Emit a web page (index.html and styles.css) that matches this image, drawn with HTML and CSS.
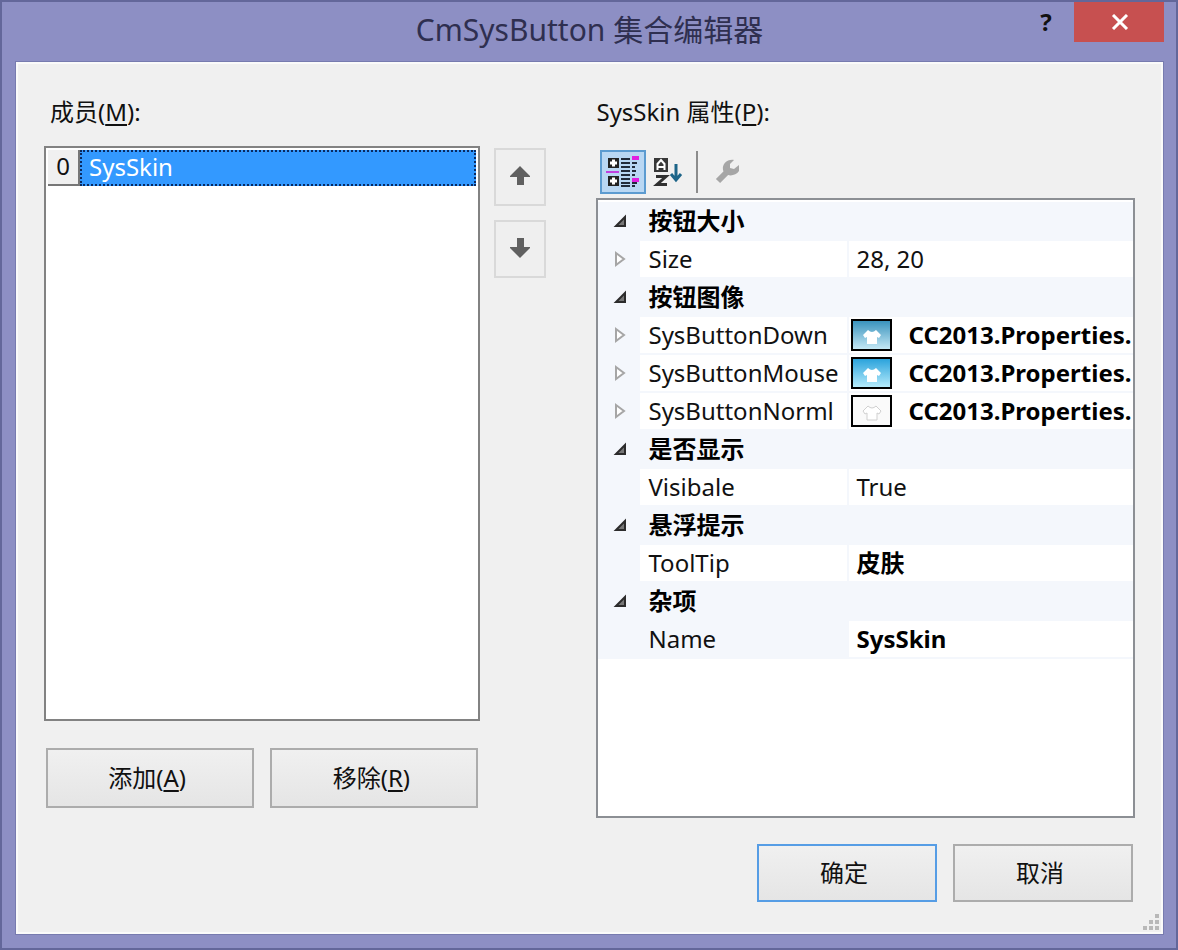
FILE: index.html
```html
<!DOCTYPE html>
<html lang="zh-CN">
<head>
<meta charset="utf-8">
<title>CmSysButton 集合编辑器</title>
<link rel="stylesheet" href="styles.css">
</head>
<body>
<main class="window">
  <header class="titlebar">
    <h1 class="title">CmSysButton 集合编辑器</h1>
    <div class="window-buttons">
      <button class="help" type="button" aria-label="帮助">?</button>
      <button class="close" type="button" aria-label="关闭">
        <svg width="18" height="16" viewBox="0 0 18 16"><path d="M2 1 L16 15 M16 1 L2 15" stroke="#fff" stroke-width="3" fill="none"/></svg>
      </button>
    </div>
  </header>
  <div class="client">
    <div class="panes">
      <section class="members">
        <h2 class="label" id="members-label">成员(<u>M</u>):</h2>
        <div class="member-list" role="listbox" aria-labelledby="members-label">
          <div class="member" role="option" aria-selected="true">
            <span class="member-index">0</span>
            <span class="member-name">SysSkin</span>
          </div>
        </div>
        <div class="member-actions">
          <button class="button" type="button">添加(<u>A</u>)</button>
          <button class="button" type="button">移除(<u>R</u>)</button>
        </div>
      </section>
      <div class="order">
        <button class="order-button" type="button" aria-label="上移">
          <svg width="20" height="20" viewBox="0 0 20 20"><path d="M10 0 L20 10 V11 H14 V19 H7 V11 H0 V10 Z" fill="#606060"/></svg>
        </button>
        <button class="order-button" type="button" aria-label="下移">
          <svg width="20" height="20" viewBox="0 0 20 20"><path d="M10 20 L20 10 V9 H14 V0 H7 V9 H0 V10 Z" fill="#606060"/></svg>
        </button>
      </div>
      <section class="properties">
        <h2 class="label">SysSkin 属性(<u>P</u>):</h2>
        <div class="toolbar">
          <button class="tool tool-active" type="button" aria-label="按分类顺序">
            <svg width="34" height="36" viewBox="0 0 34 36">
              <path d="M2 4h11v10H2z M2 22h11v10H2z" fill="#222"/>
              <path d="M7.500 5.500v7 M4 9h7 M7.500 23.500v7 M4 27h7" stroke="#fff" stroke-width="3"/>
              <path d="M0 18h13" stroke="#c040e0" stroke-width="2"/>
              <path d="M15 5h9 M15 9h9 M15 13h9 M15 17h9 M15 21h9 M15 25h9 M15 29h9 M15 32h9 M26 9h5 M26 13h3 M26 17h4 M26 21h3 M26 29h5 M26 32h3" stroke="#222b3a" stroke-width="2"/>
              <path d="M26 2h7v4h-7z M26 24h7v4h-7z" fill="#e020e0"/>
            </svg>
          </button>
          <button class="tool" type="button" aria-label="字母顺序">
            <svg width="32" height="32" viewBox="0 0 32 32">
              <path d="M2 2h14v14H2z" fill="#383838"/>
              <path d="M5.500 14V8l3.500-4l3.500 4v6 M6 11h6" stroke="#fff" stroke-width="2" fill="none"/>
              <path d="M4 20.500h10L5 28.500h10" stroke="#303030" stroke-width="3" fill="none"/>
              <path d="M24 8v16 M19 18l5 6l5-6" stroke="#1c6488" stroke-width="3" fill="none"/>
            </svg>
          </button>
          <span class="separator"></span>
          <button class="tool" type="button" aria-label="属性页" disabled>
            <svg width="26" height="26" viewBox="0 0 26 26">
              <path d="M4 22L14 12" stroke="#a6a6a6" stroke-width="6"/>
              <path d="M20 1C13 0 8 5 9 11C11 18 21 18 25 12V6L20 10L16 9V5Z" fill="#a6a6a6"/>
            </svg>
          </button>
        </div>
        <div class="grid-box">
          <table class="grid">
            <colgroup><col class="col-gutter"><col class="col-name"><col></colgroup>
            <tbody>
              <tr class="category"><td><svg class="glyph" width="14" height="14" viewBox="0 0 14 14"><path d="M12 3V12H3Z" fill="#777" stroke="#2c2c2c" stroke-width="2"/></svg></td><th colspan="2">按钮大小</th></tr>
              <tr><td><svg class="glyph" width="14" height="18" viewBox="0 0 14 18"><path d="M3 3L11 9L3 15Z" fill="#fff" stroke="#a6a6a6" stroke-width="2"/></svg></td><th>Size</th><td>28, 20</td></tr>
              <tr class="category"><td><svg class="glyph" width="14" height="14" viewBox="0 0 14 14"><path d="M12 3V12H3Z" fill="#777" stroke="#2c2c2c" stroke-width="2"/></svg></td><th colspan="2">按钮图像</th></tr>
              <tr><td><svg class="glyph" width="14" height="18" viewBox="0 0 14 18"><path d="M3 3L11 9L3 15Z" fill="#fff" stroke="#a6a6a6" stroke-width="2"/></svg></td><th>SysButtonDown</th><td class="changed"><div class="image-value"><span class="thumb thumb-down"><svg width="20" height="18" viewBox="0 0 20 18"><path class="shirt" d="M6 2Q10 6 14 2L19 7L17 10L15 9V16H5V9L3 10L1 7Z"/></svg></span>CC2013.Properties.</div></td></tr>
              <tr><td><svg class="glyph" width="14" height="18" viewBox="0 0 14 18"><path d="M3 3L11 9L3 15Z" fill="#fff" stroke="#a6a6a6" stroke-width="2"/></svg></td><th>SysButtonMouse</th><td class="changed"><div class="image-value"><span class="thumb thumb-hover"><svg width="20" height="18" viewBox="0 0 20 18"><path class="shirt" d="M6 2Q10 6 14 2L19 7L17 10L15 9V16H5V9L3 10L1 7Z"/></svg></span>CC2013.Properties.</div></td></tr>
              <tr><td><svg class="glyph" width="14" height="18" viewBox="0 0 14 18"><path d="M3 3L11 9L3 15Z" fill="#fff" stroke="#a6a6a6" stroke-width="2"/></svg></td><th>SysButtonNorml</th><td class="changed"><div class="image-value"><span class="thumb thumb-normal"><svg width="20" height="18" viewBox="0 0 20 18"><path class="shirt" d="M6 2Q10 6 14 2L19 7L17 10L15 9V16H5V9L3 10L1 7Z"/></svg></span>CC2013.Properties.</div></td></tr>
              <tr class="category"><td><svg class="glyph" width="14" height="14" viewBox="0 0 14 14"><path d="M12 3V12H3Z" fill="#777" stroke="#2c2c2c" stroke-width="2"/></svg></td><th colspan="2">是否显示</th></tr>
              <tr><td></td><th>Visibale</th><td>True</td></tr>
              <tr class="category"><td><svg class="glyph" width="14" height="14" viewBox="0 0 14 14"><path d="M12 3V12H3Z" fill="#777" stroke="#2c2c2c" stroke-width="2"/></svg></td><th colspan="2">悬浮提示</th></tr>
              <tr><td></td><th>ToolTip</th><td class="changed">皮肤</td></tr>
              <tr class="category"><td><svg class="glyph" width="14" height="14" viewBox="0 0 14 14"><path d="M12 3V12H3Z" fill="#777" stroke="#2c2c2c" stroke-width="2"/></svg></td><th colspan="2">杂项</th></tr>
              <tr class="current"><td></td><th>Name</th><td class="changed">SysSkin</td></tr>
            </tbody>
          </table>
        </div>
      </section>
    </div>
    <footer class="footer">
      <button class="button button-default" type="button">确定</button>
      <button class="button" type="button">取消</button>
    </footer>
    <svg class="grip" width="16" height="16" viewBox="0 0 16 16"><path d="M12 0h4v4h-4z M6 6h4v4h-4z M12 6h4v4h-4z M0 12h4v4h-4z M6 12h4v4h-4z M12 12h4v4h-4z" fill="#b8b8b8"/></svg>
  </div>
</main>
</body>
</html>
```
FILE: styles.css
```css
* {
  box-sizing: border-box;
}

body {
  margin: 0;
  font-family: "Noto Sans", "Noto Sans CJK SC", sans-serif;
  font-size: 24px;
  line-height: 32px;
  color: #111;
}

button {
  margin: 0;
  padding: 0;
  font: inherit;
  color: inherit;
}

svg {
  display: block;
}

u {
  text-decoration-thickness: 2px;
  text-underline-offset: 3px;
}

.window {
  display: flex;
  flex-direction: column;
  min-height: 100vh;
  padding: 0 12px 13px 13px;
  border: 2px solid #63679a;
  background: #8d8fc4;
}

.titlebar {
  display: grid;
  grid-template-columns: 1fr auto 1fr;
  height: 59px;
}

.title {
  grid-column: 2;
  margin: 0;
  font-size: 30px;
  font-weight: 400;
  line-height: 56px;
  color: #2f2f50;
}

.window-buttons {
  display: flex;
  justify-content: flex-end;
  align-items: flex-start;
}

.help {
  width: 56px;
  height: 40px;
  border: 0;
  background: none;
  font-weight: 700;
}

.close {
  display: flex;
  align-items: center;
  justify-content: center;
  width: 90px;
  height: 40px;
  padding-left: 2px;
  border: 0;
  background: #c75050;
}

.client {
  position: relative;
  display: flex;
  flex: 1;
  flex-direction: column;
  padding: 32px 28px 32px;
  border: 1px solid #777baf;
  background: #f0f0f0;
  box-shadow: inset 0 0 0 2px #fafafa;
}

.panes {
  display: flex;
  flex: 1;
}

.members {
  display: flex;
  flex: 436;
  flex-direction: column;
  min-width: 0;
  padding-bottom: 10px;
}

.label {
  margin: 0;
  padding: 0 6px;
  font-size: 24px;
  font-weight: 400;
  line-height: 36px;
}

.member-list {
  flex: 1;
  margin-top: 16px;
  padding: 2px;
  border: 2px solid #828282;
  background: #fff;
}

.member {
  display: flex;
  height: 36px;
}

.member-index {
  width: 32px;
  border-right: 2px solid #777;
  border-bottom: 2px solid #777;
  background: #f0f0f0;
  line-height: 32px;
  text-align: center;
}

.member-name {
  flex: 1;
  padding: 0 7px;
  border: 2px dotted #0a2a60;
  background: #3399ff;
  color: #fff;
  line-height: 30px;
}

.member-actions {
  display: flex;
  gap: 16px;
  padding: 27px 2px 0;
}

.button {
  flex: 1;
  height: 60px;
  padding-right: 6px;
  border: 2px solid #acacac;
  background: linear-gradient(#f0f0f0, #e5e5e5);
}

.order {
  display: flex;
  flex-direction: column;
  gap: 14px;
  width: 52px;
  margin: 54px 50px 0 14px;
}

.order-button {
  display: flex;
  align-items: center;
  justify-content: center;
  height: 58px;
  padding-bottom: 2px;
  border: 2px solid #d9d9d9;
  background: #efefef;
}

.properties {
  display: flex;
  flex: 538;
  flex-direction: column;
  min-width: 0;
}

.properties .label {
  padding: 0;
}

.toolbar {
  display: flex;
  align-items: center;
  margin-top: 20px;
  padding: 0 4px;
}

.tool {
  display: flex;
  align-items: center;
  justify-content: center;
  width: 44px;
  height: 44px;
  border: 0;
  background: none;
}

.tool-active {
  width: 46px;
  border: 2px solid #5c9bd0;
  background: #b9d7f3;
}

.separator {
  width: 2px;
  height: 42px;
  margin: 0 7px 0 6px;
  background: #8c8c8c;
}

.grid-box {
  flex: 1;
  margin-top: 4px;
  padding-top: 2px;
  border: 2px solid #8c8f94;
  background: #fff;
}

.grid {
  width: 100%;
  border-collapse: collapse;
  table-layout: fixed;
}

.col-gutter {
  width: 42px;
}

.col-name {
  width: 208px;
}

.grid tr {
  height: 38px;
}

.grid td,
.grid th {
  overflow: hidden;
  padding: 0 0 0 8px;
  border-bottom: 2px solid #f4f7fc;
  font-weight: 400;
  text-align: left;
  white-space: nowrap;
}

.grid th + td {
  border-left: 2px solid #f4f7fc;
  padding-left: 7px;
}

.grid td:first-child,
.grid .category th,
.grid .current th {
  background: #f4f7fc;
}

.grid td:first-child {
  padding: 0 0 0 2px;
}

.grid .category th,
.grid .changed {
  color: #000;
  font-weight: 700;
}

.glyph {
  margin: 0 auto;
}

.grid .changed:has(.image-value) {
  padding-left: 2px;
}

.image-value {
  display: flex;
  align-items: center;
  gap: 16px;
}

.thumb {
  display: flex;
  flex: none;
  align-items: center;
  justify-content: center;
  width: 41px;
  height: 32px;
  padding-top: 4px;
  border: 2px solid #000;
}

.thumb-down {
  background: linear-gradient(#3a93bd, #c4e8f5);
}

.thumb-hover {
  background: linear-gradient(#2ba3dc, #b5ebfb);
}

.thumb-normal {
  background: #fafafa;
}

.shirt {
  fill: #fff;
}

.thumb-normal .shirt {
  stroke: #d0d0d0;
}

.footer {
  display: flex;
  justify-content: flex-end;
  gap: 16px;
  padding: 26px 2px 0;
}

.footer .button {
  flex: none;
  width: 180px;
  height: 58px;
}

.footer .button-default {
  border-color: #569de5;
}

.grip {
  position: absolute;
  right: 4px;
  bottom: 4px;
}
```
